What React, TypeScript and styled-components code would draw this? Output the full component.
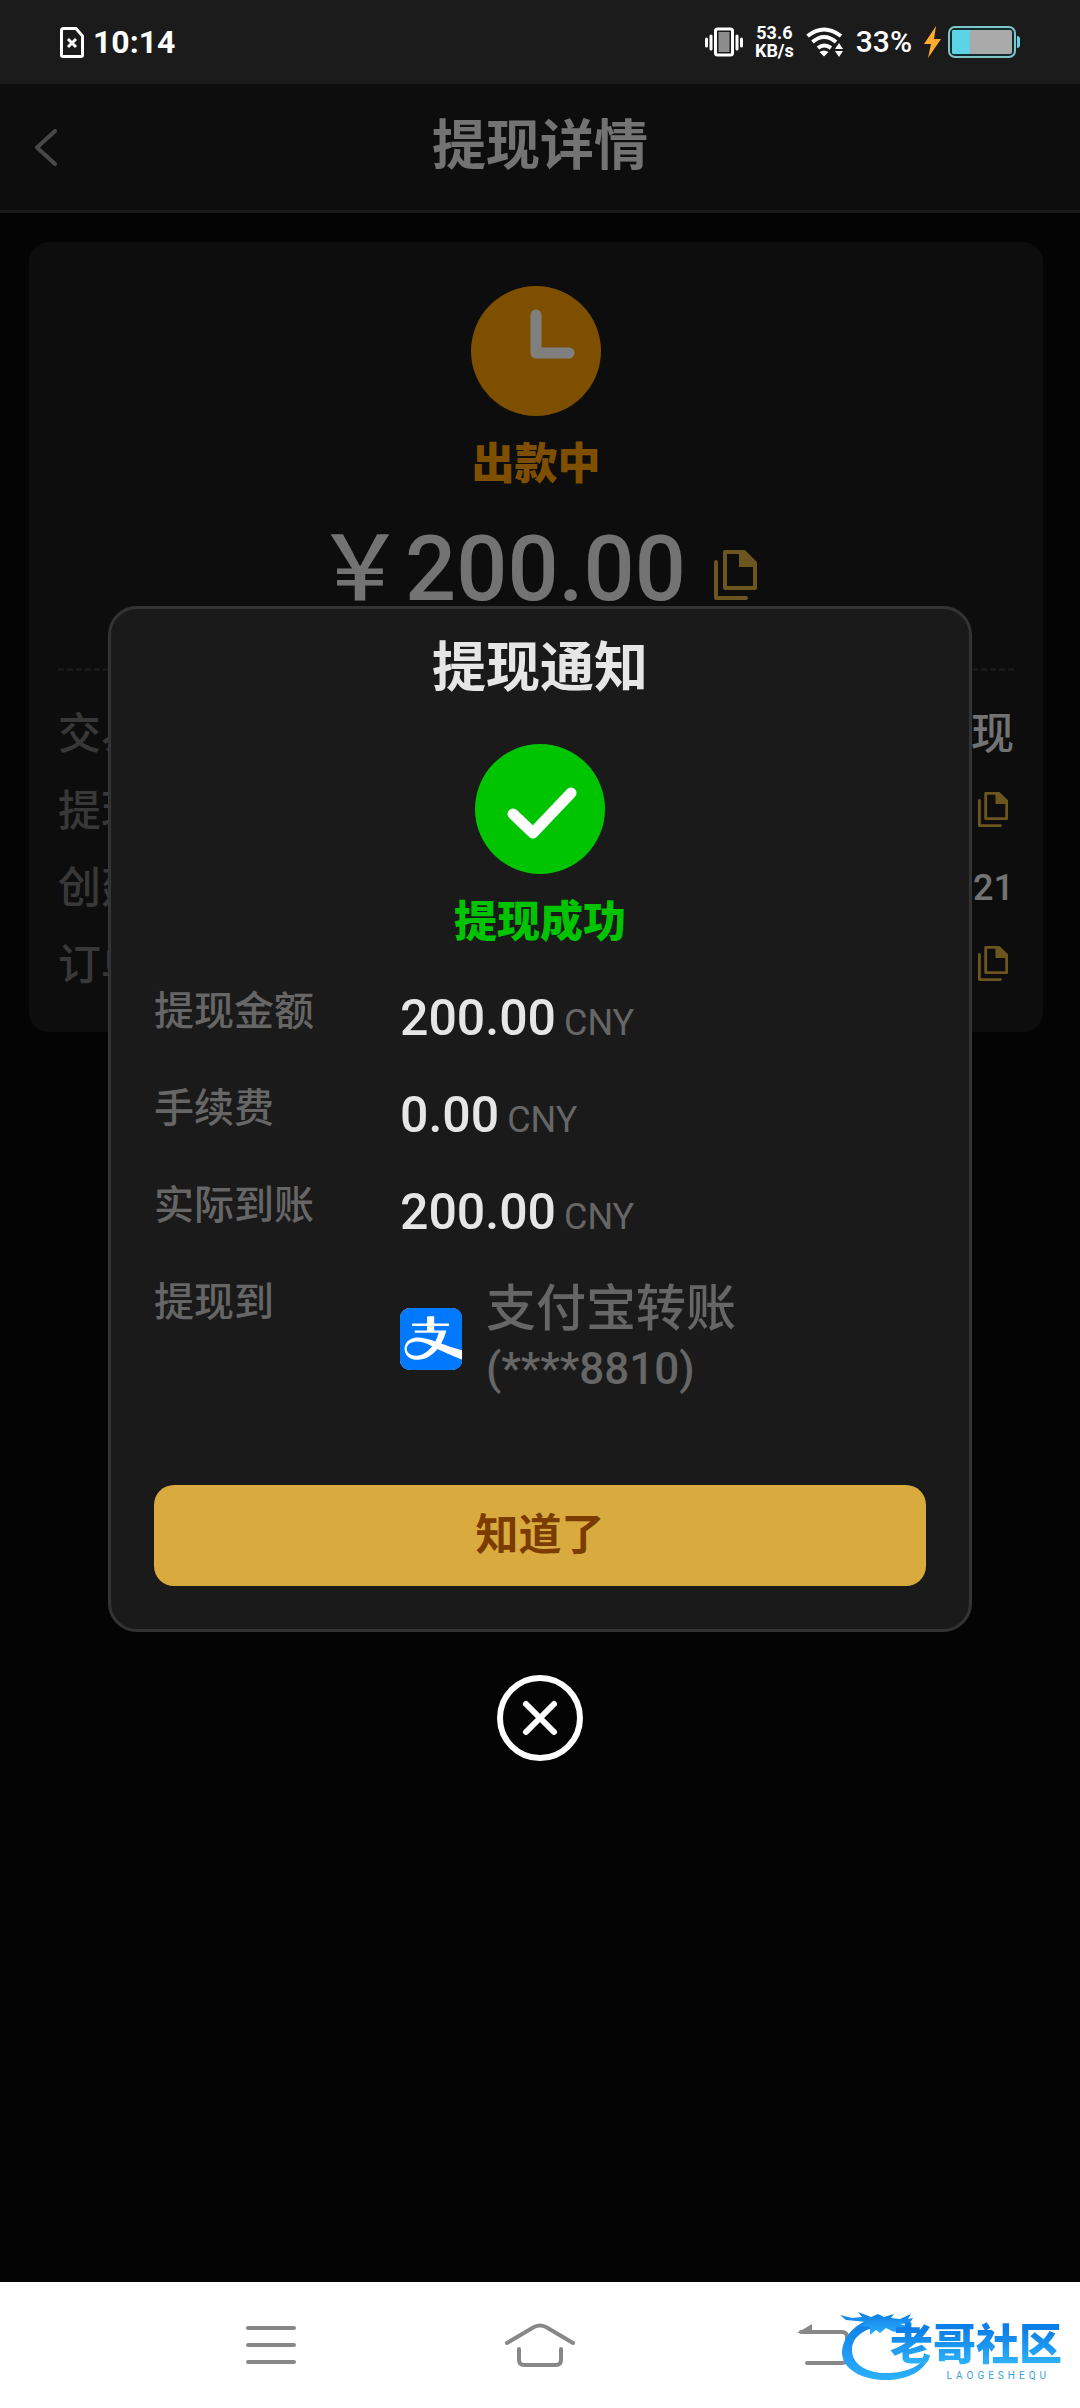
import React from "react";
import styled, { createGlobalStyle } from "styled-components";
import { BsAlipay } from "react-icons/bs";

const GlobalStyle = createGlobalStyle`
  * { box-sizing: border-box; }
  body {
    margin: 0;
    background: #080808;
    font-family: Roboto, "Noto Sans CJK SC", sans-serif;
    color: #e6e6e6;
  }
  button {
    font: inherit;
    color: inherit;
    border: 0;
    padding: 0;
    background: none;
    cursor: pointer;
  }
  svg { display: block; flex: none; }
  h1, h2, p, dl, dd { margin: 0; }
`;

const Screen = styled.div`
  min-height: 100vh;
  display: flex;
  flex-direction: column;
`;

const StatusBar = styled.header`
  height: 84px;
  padding: 0 60px;
  display: flex;
  align-items: center;
  justify-content: space-between;
  background: #1b1b1b;
  color: #fff;
`;

const StatusGroup = styled.div<{ $gap: number }>`
  display: flex;
  align-items: center;
  gap: ${(p) => p.$gap}px;
`;

const Clock = styled.span`
  font-size: 32px;
  line-height: 48px;
  font-weight: 700;
`;

const Percent = styled.span`
  font-size: 30px;
  line-height: 48px;
  font-weight: 500;
`;

const NetSpeed = styled.span`
  display: flex;
  flex-direction: column;
  align-items: center;
  font-size: 18px;
  line-height: 18px;
  font-weight: 700;
`;

const Content = styled.main`
  flex: 1;
  position: relative;
  background: #080808;
`;

const TitleBar = styled.div`
  height: 129px;
  padding: 0 35px;
  display: grid;
  grid-template-columns: 22px 1fr 22px;
  align-items: center;
  background: #1a1a1a;
  border-bottom: 3px solid #333;
`;

const PageTitle = styled.h1`
  font-size: 54px;
  line-height: 76px;
  font-weight: 700;
  text-align: center;
`;

const Card = styled.section`
  margin: 29px 37px 29px 29px;
  padding: 44px 29px 28px;
  border-radius: 20px;
  background: #1a1a1a;
  display: flex;
  flex-direction: column;
  align-items: center;
`;

const StateText = styled.p<{ $color: string }>`
  font-size: 43px;
  line-height: 60px;
  font-weight: 900;
  color: ${(p) => p.$color};
  margin-top: 18px;
`;

const Amount = styled.div`
  margin-top: 20px;
  display: flex;
  align-items: baseline;
  gap: 28px;
  font-size: 90px;
  line-height: 112px;
  font-weight: 500;
`;

const Details = styled.dl`
  align-self: stretch;
  margin-top: 42px;
  padding-top: 25px;
  border-top: 3px dashed #333;
`;

const DetailRow = styled.div`
  display: flex;
  justify-content: space-between;
  align-items: center;
  font-size: 43px;
  line-height: 77px;
  font-weight: 500;

  dt { color: #707070; }
  dd { display: flex; }
`;

const Digits = styled.span`
  font-size: 36px;
`;

const CopyButton = styled.button`
  display: flex;
  align-items: center;
  color: #d9ab3f;
`;

const RowCopy = styled(CopyButton)`
  height: 77px;
  padding: 0 6px 4px 0;
`;

const Overlay = styled.div`
  position: absolute;
  inset: 0;
  padding: 0 10%;
  display: flex;
  flex-direction: column;
  align-items: center;
  justify-content: center;
  gap: 43px;
  background: rgba(0, 0, 0, 0.5);
`;

const Dialog = styled.section`
  width: 100%;
  padding: 22px 43px 43px;
  border: 3px solid #333;
  border-radius: 29px;
  background: #1a1a1a;
  display: flex;
  flex-direction: column;
  align-items: center;
`;

const DialogTitle = styled.h2`
  font-size: 54px;
  line-height: 76px;
  font-weight: 700;
  margin-bottom: 37px;
`;

const Summary = styled.dl`
  align-self: stretch;
  margin-top: 30px;
  display: flex;
  flex-direction: column;
  gap: 24px;
`;

const SummaryRow = styled.div`
  display: grid;
  grid-template-columns: 246px 1fr;

  dt {
    color: #666;
    font-size: 40px;
    line-height: 60px;
    font-weight: 500;
  }
`;

const Money = styled.dd`
  display: flex;
  align-items: baseline;
  gap: 8px;
  font-size: 50px;
  line-height: 73px;
  font-weight: 500;

  small {
    color: #666;
    font-size: 36px;
    line-height: 40px;
    font-weight: 400;
  }
`;

const Account = styled.dd`
  display: flex;
  align-items: center;
  gap: 24px;
  padding-top: 6px;
  color: #666;
  font-size: 50px;
  line-height: 60px;
  font-weight: 500;
`;

const AccountIcon = styled.span`
  display: flex;
  border-radius: 10px;
  background: #fff;
  color: #0079fe;
`;

const AccountTail = styled.span`
  display: block;
  font-size: 44px;
`;

const Confirm = styled.button`
  align-self: stretch;
  height: 101px;
  margin-top: 86px;
  border-radius: 20px;
  background: #d9ab3f;
  color: #7a3c00;
  font-size: 43px;
  line-height: 60px;
  font-weight: 700;
`;

const NavBar = styled.nav`
  position: relative;
  height: 126px;
  padding: 0 136px;
  display: grid;
  grid-template-columns: repeat(3, 1fr);
  align-items: center;
  justify-items: center;
  background: #fff;
  color: #888;
`;

const BackButton = styled.button`
  padding-left: 28px;
`;

const Watermark = styled.div`
  position: absolute;
  right: 18px;
  bottom: 26px;
  display: grid;
  align-items: end;
  justify-items: end;

  > * { grid-area: 1 / 1; }
`;

const Brand = styled.div`
  display: flex;
  flex-direction: column;
  align-items: flex-end;

  strong {
    font-size: 43px;
    line-height: 50px;
    font-weight: 900;
    background: linear-gradient(#0c7fe8 20%, #2fb4fb 90%);
    background-clip: text;
    color: transparent;
  }
  span {
    padding-right: 12px;
    color: #3d9fe0;
    font-size: 10px;
    line-height: 12px;
    letter-spacing: 4px;
  }
`;

function CopyIcon({ size }: { size: number }) {
  return (
    <svg width={(size * 43) / 50} height={size} viewBox="0 0 43 50" fill="none" stroke="currentColor" strokeWidth="4" strokeLinejoin="round" strokeLinecap="round">
      <path d="M2 12V48H32" />
      <path d="M11 2H30L41 13V38H11Z" />
      <path d="M25 2H30L41 13V17H25Z" fill="currentColor" stroke="none" />
    </svg>
  );
}

const details = [
  { label: "交易类型", value: "提现" },
  { label: "提现账号" },
  { label: "创建时间", value: <Digits>21</Digits> },
  { label: "订单编号" },
];

const amounts = [
  { label: "提现金额", value: "200.00" },
  { label: "手续费", value: "0.00" },
  { label: "实际到账", value: "200.00" },
];

export default function App() {
  return (
    <Screen>
      <GlobalStyle />
      <StatusBar>
        <StatusGroup $gap={9}>
          <svg width="24" height="31" viewBox="0 0 24 31" fill="none" stroke="#fff" strokeWidth="3">
            <path d="M3.500 1.500H16L22.500 9V28Q22.500 29.500 21 29.500H3Q1.500 29.500 1.500 28V3.500Q1.500 1.500 3.500 1.500Z" />
            <path d="M8 12L16 20M16 12L8 20" />
          </svg>
          <Clock>10:14</Clock>
        </StatusGroup>
        <StatusGroup $gap={12}>
          <svg width="38" height="30" viewBox="0 0 38 30" stroke="#fff" fill="none" strokeLinecap="round">
            <rect x="10.500" y="2" width="17" height="26" rx="2" fill="#1b1b1b" strokeWidth="3" />
            <rect x="13.500" y="5" width="11" height="20" fill="#8c8c8c" stroke="none" />
            <path d="M1.500 12V19M6 9V22M32 9V22M36.500 12V19" strokeWidth="3" />
          </svg>
          <NetSpeed>
            <span>53.6</span>
            <span>KB/s</span>
          </NetSpeed>
          <svg width="38" height="30" viewBox="0 0 38 30" fill="none" stroke="#fff" strokeWidth="4">
            <path d="M1.500 9Q18 -4 35 9M6.500 15Q18 5 30 15M12 21Q18 16 25 21" />
            <path d="M13.500 25Q18 22 22.500 25L18 29.500Z" fill="#fff" stroke="none" />
            <path d="M33 16L37 22H29ZM29 24H37L33 30Z" fill="#fff" stroke="none" />
          </svg>
          <Percent>33%</Percent>
          <StatusGroup $gap={7}>
            <svg width="17" height="32" viewBox="0 0 17 32">
              <path d="M12 0L0 18H7L4 32L17 13H10Z" fill="#ffab2e" />
            </svg>
            <svg width="72" height="32" viewBox="0 0 72 32">
              <rect x="1" y="1" width="66" height="30" rx="6" fill="#102c30" stroke="#7fc6c9" strokeWidth="2" />
              <rect x="4" y="4" width="60" height="24" rx="2" fill="#aaa" />
              <path d="M6 4H22V28H6Q4 28 4 26V6Q4 4 6 4Z" fill="#5dd3e6" />
              <path d="M69 10Q72 10 72 13V19Q72 22 69 22Z" fill="#5dd3e6" />
            </svg>
          </StatusGroup>
        </StatusGroup>
      </StatusBar>

      <Content>
        <TitleBar>
          <button aria-label="返回">
            <svg width="22" height="37" viewBox="0 0 22 37" fill="none" stroke="#909090" strokeWidth="4" strokeLinecap="round" strokeLinejoin="round">
              <path d="M20 2L2 18.500L20 35" />
            </svg>
          </button>
          <PageTitle>提现详情</PageTitle>
        </TitleBar>

        <Card>
          <svg width="130" height="130" viewBox="0 0 130 130">
            <circle cx="65" cy="65" r="65" fill="#ff9f00" />
            <path d="M65 29V67H98" fill="none" stroke="#fff" strokeWidth="11" strokeLinecap="round" strokeLinejoin="round" />
          </svg>
          <StateText $color="#ff9f00">出款中</StateText>
          <Amount>
            <span>{"\uFFE5"}200.00</span>
            <CopyButton aria-label="复制金额">
              <CopyIcon size={50} />
            </CopyButton>
          </Amount>
          <Details>
            {details.map((row) => (
              <DetailRow key={row.label}>
                <dt>{row.label}</dt>
                <dd>
                  {row.value ?? (
                    <RowCopy aria-label={`复制${row.label}`}>
                      <CopyIcon size={35} />
                    </RowCopy>
                  )}
                </dd>
              </DetailRow>
            ))}
          </Details>
        </Card>

        <Overlay>
          <Dialog role="dialog" aria-labelledby="notice-title">
            <DialogTitle id="notice-title">提现通知</DialogTitle>
            <svg width="130" height="130" viewBox="0 0 130 130">
              <circle cx="65" cy="65" r="65" fill="#00c400" />
              <path d="M38 70L58 89L96 49" fill="none" stroke="#fff" strokeWidth="11" strokeLinecap="round" strokeLinejoin="round" />
            </svg>
            <StateText $color="#00c400">提现成功</StateText>
            <Summary>
              {amounts.map((row) => (
                <SummaryRow key={row.label}>
                  <dt>{row.label}</dt>
                  <Money>
                    {row.value}
                    <small>CNY</small>
                  </Money>
                </SummaryRow>
              ))}
              <SummaryRow>
                <dt>提现到</dt>
                <Account>
                  <AccountIcon>
                    <BsAlipay size={62} />
                  </AccountIcon>
                  <span>
                    支付宝转账
                    <AccountTail>(****8810)</AccountTail>
                  </span>
                </Account>
              </SummaryRow>
            </Summary>
            <Confirm>知道了</Confirm>
          </Dialog>
          <button aria-label="关闭">
            <svg width="86" height="86" viewBox="0 0 86 86" fill="none" stroke="#fff" strokeWidth="6" strokeLinecap="round">
              <circle cx="43" cy="43" r="40" />
              <path d="M29 29L57 57M57 29L29 57" />
            </svg>
          </button>
        </Overlay>
      </Content>

      <NavBar>
        <button aria-label="菜单">
          <svg width="50" height="40" viewBox="0 0 50 40" fill="none" stroke="currentColor" strokeWidth="4" strokeLinecap="round">
            <path d="M2 3H48M2 20H48M2 37H48" />
          </svg>
        </button>
        <button aria-label="主页">
          <svg width="70" height="44" viewBox="0 0 70 44" fill="none" stroke="currentColor" strokeWidth="4" strokeLinecap="round">
            <path d="M2 20L29 4Q35 1 41 4L68 20" />
            <path d="M14 26V37Q14 42 19 42H51Q56 42 56 37V26" />
          </svg>
        </button>
        <BackButton aria-label="后退">
          <svg width="52" height="44" viewBox="0 0 52 44" fill="none" stroke="currentColor" strokeWidth="4" strokeLinecap="round">
            <path d="M4 9H45Q50 9 50 14V35Q50 40 45 40H10" />
            <path d="M0 10L15 1V10Z" fill="currentColor" stroke="none" />
          </svg>
        </BackButton>
        <Watermark>
          <svg width="222" height="72" viewBox="0 0 222 72">
            <defs>
              <linearGradient id="dragon" x1="0" y1="0" x2="0" y2="1">
                <stop offset="0" stopColor="#0d7be6" />
                <stop offset="1" stopColor="#2cb0fb" />
              </linearGradient>
            </defs>
            <g fill="url(#dragon)">
              <path d="M32 9C14 14 3 27 2 42C2 60 24 71 49 70C70 69 86 60 90 44C80 56 68 62 50 63C28 64 12 55 12 40C12 27 24 19 38 17Z" />
              <path d="M0 5L12 8L22 7L18 2L31 7L38 4L44 7L54 4L51 8L60 9L71 4L68 9L73 8L70 13L60 14L71 17L68 20L60 19L54 22L46 18L40 23L36 20L30 25L30 17L20 16L26 12L6 10Z" />
            </g>
          </svg>
          <Brand>
            <strong>老哥社区</strong>
            <span>LAOGESHEQU</span>
          </Brand>
        </Watermark>
      </NavBar>
    </Screen>
  );
}
